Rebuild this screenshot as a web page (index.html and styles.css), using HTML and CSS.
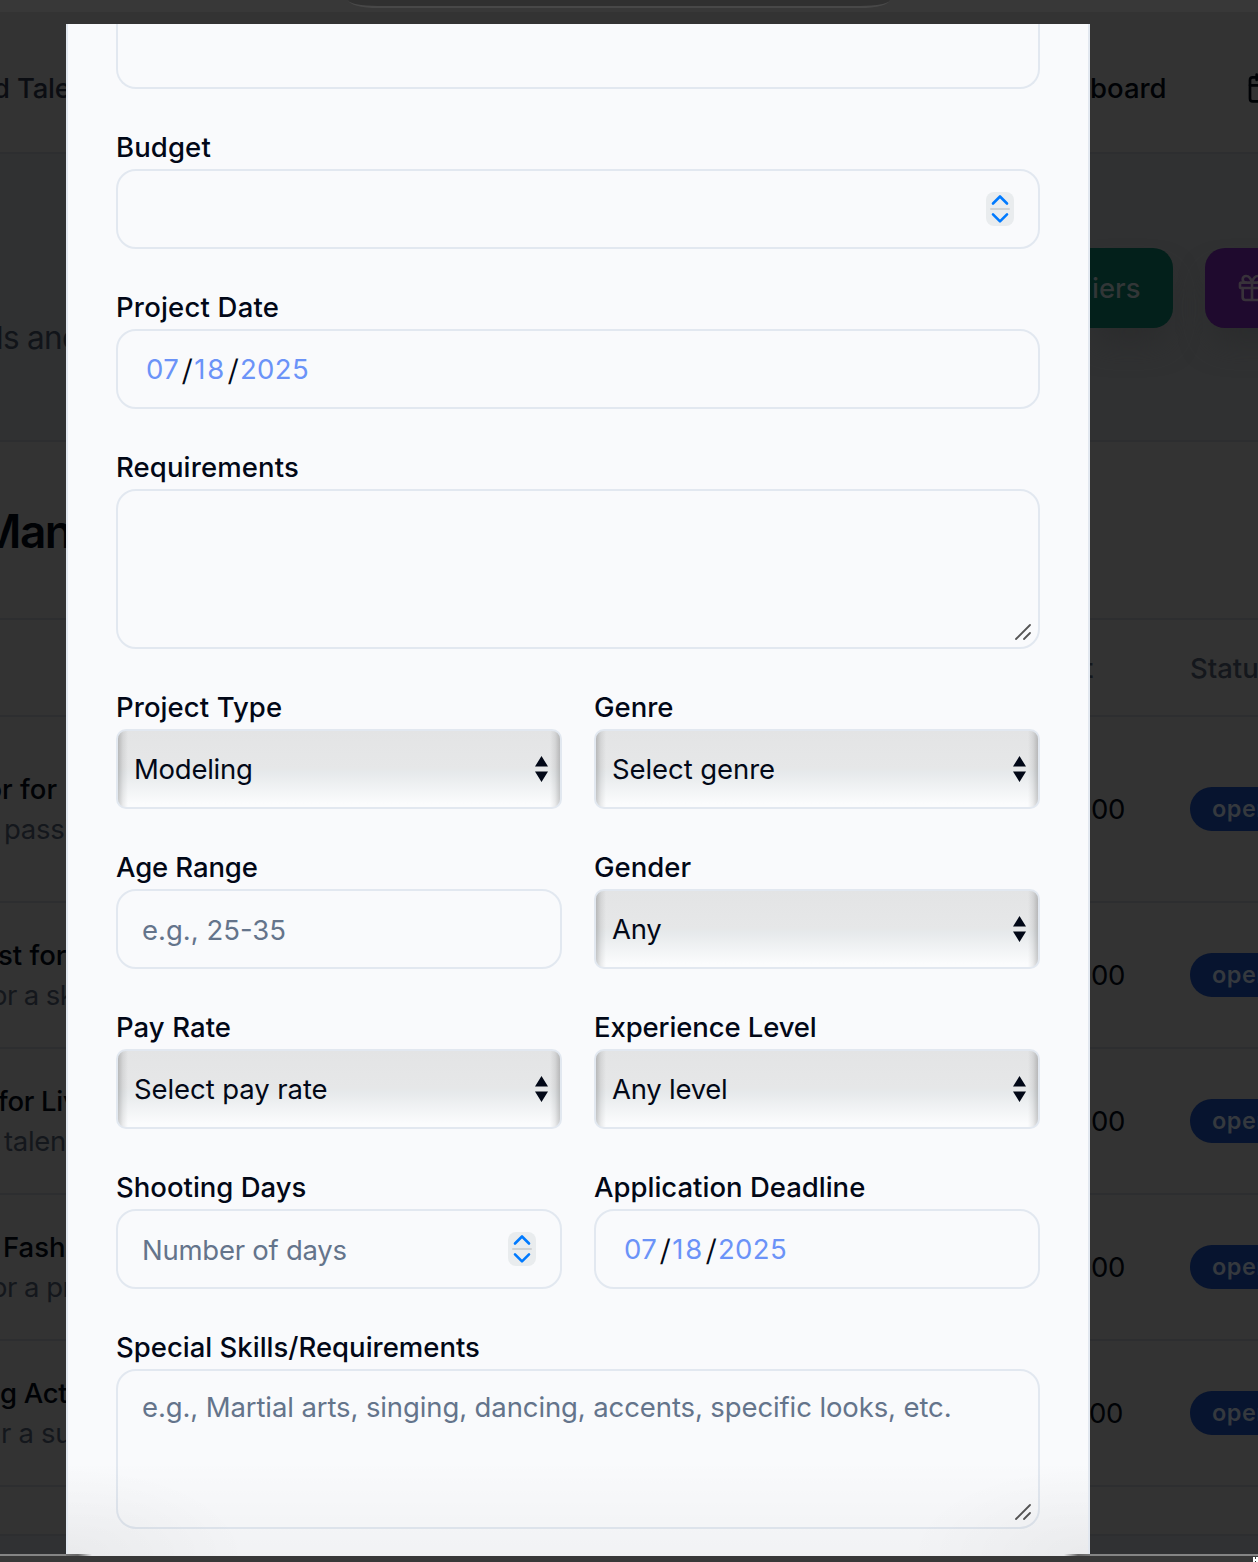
FILE: index.html
```html
<!DOCTYPE html>
<html lang="en">
<head>
<meta charset="utf-8">
<title>Create project</title>
<link rel="stylesheet" href="styles.css">
</head>
<body>
<div class="screen">
  <div class="backdrop">
    <div class="chrome"><div class="address"></div></div>
    <div class="band header">
      <div class="left"><span class="nav nav-talent">d Tale</span></div>
      <div class="right nav-right"><span class="nav nav-board">board</span>
        <svg class="icon calendar" viewBox="0 0 24 24"><path d="M8 2v4M16 2v4M3 10h18"/><rect x="3" y="4" width="18" height="18" rx="2"/></svg>
      </div>
    </div>
    <div class="band hero">
      <div class="left"><span class="tagline">ls and</span></div>
      <div class="right actions">
        <div class="btn green">iers</div>
        <div class="btn purple"><svg class="icon" viewBox="0 0 24 24"><rect x="3" y="8" width="18" height="4" rx="1"/><path d="M12 8v13M19 12v7a2 2 0 0 1-2 2H7a2 2 0 0 1-2-2v-7M7.5 8a2.5 2.5 0 0 1 0-5A4.8 8 0 0 1 12 8a4.8 8 0 0 1 4.5-5 2.5 2.5 0 0 1 0 5"/></svg></div>
      </div>
    </div>
    <div class="band heading"><div class="left"><span class="title">Man</span></div></div>
    <div class="band thead"><div class="left"></div><div class="right"><span class="amount col">t</span><span class="col">Status</span></div></div>
    <div class="band row tall"><div class="left"><b class="t1">or for</b><span class="s1">passi</span></div><div class="right"><span class="amount">00</span><span class="badge">open</span></div></div>
    <div class="band row"><div class="left"><b class="t2">st for</b><span class="s2">or a ski</span></div><div class="right"><span class="amount">00</span><span class="badge">open</span></div></div>
    <div class="band row"><div class="left"><b class="t3">for Liv</b><span class="s3">talent</span></div><div class="right"><span class="amount">00</span><span class="badge">open</span></div></div>
    <div class="band row"><div class="left"><b class="t4">Fashi</b><span class="s4">or a pr</span></div><div class="right"><span class="amount">00</span><span class="badge">open</span></div></div>
    <div class="band row"><div class="left"><b class="t5">g Acto</b><span class="s5">r a sup</span></div><div class="right"><span class="amount last">00</span><span class="badge">open</span></div></div>
    <div class="band tail"></div>
    <div class="footer"></div>
    <div class="edge"><svg viewBox="0 0 5 6"><path d="M0 6V1h2v2h1V1h2v5H3V5H2v1z"/></svg></div>
  </div>

  <div class="modal">
    <div class="control cut"></div>
    <div class="field"><div class="label l-budget">Budget</div>
      <div class="control input"><span></span><svg class="stepper" viewBox="0 0 28 34"><rect width="28" height="34" rx="8"/><path class="mid" d="M5 17h18"/><path d="M7 11.5l7-7 7 7M7 22.3l7 7 7-7"/></svg></div></div>
    <div class="field"><div class="label l-date">Project Date</div>
      <div class="control date"><span>07</span><i>/</i><span>18</span><i>/</i><span>2025</span></div></div>
    <div class="field"><div class="label l-req">Requirements</div>
      <div class="control area"><svg class="grip" viewBox="0 0 16 16"><path d="M1 15L15 1M9 15l6-6"/></svg></div></div>
    <div class="pair">
      <div class="field"><div class="label l-type">Project Type</div><div class="control select"><span class="v-model">Modeling</span><svg viewBox="0 0 13 26"><path d="M6.5 0L13 10.5H0zM6.5 26L0 15.5h13z"/></svg></div></div>
      <div class="field"><div class="label">Genre</div><div class="control select"><span class="v-sel">Select genre</span><svg viewBox="0 0 13 26"><path d="M6.5 0L13 10.5H0zM6.5 26L0 15.5h13z"/></svg></div></div>
    </div>
    <div class="pair">
      <div class="field"><div class="label l-age">Age Range</div><div class="control input"><span class="v-age">e.g., 25-35</span></div></div>
      <div class="field"><div class="label">Gender</div><div class="control select"><span class="v-any">Any</span><svg viewBox="0 0 13 26"><path d="M6.5 0L13 10.5H0zM6.5 26L0 15.5h13z"/></svg></div></div>
    </div>
    <div class="pair">
      <div class="field"><div class="label l-pay">Pay Rate</div><div class="control select"><span class="v-sel">Select pay rate</span><svg viewBox="0 0 13 26"><path d="M6.5 0L13 10.5H0zM6.5 26L0 15.5h13z"/></svg></div></div>
      <div class="field"><div class="label l-exp">Experience Level</div><div class="control select"><span class="v-level">Any level</span><svg viewBox="0 0 13 26"><path d="M6.5 0L13 10.5H0zM6.5 26L0 15.5h13z"/></svg></div></div>
    </div>
    <div class="pair">
      <div class="field"><div class="label">Shooting Days</div><div class="control input"><span class="v-days">Number of days</span><svg class="stepper" viewBox="0 0 28 34"><rect width="28" height="34" rx="8"/><path class="mid" d="M5 17h18"/><path d="M7 11.5l7-7 7 7M7 22.3l7 7 7-7"/></svg></div></div>
      <div class="field"><div class="label">Application Deadline</div><div class="control date"><span>07</span><i>/</i><span>18</span><i>/</i><span>2025</span></div></div>
    </div>
    <div class="field"><div class="label">Special Skills/Requirements</div>
      <div class="control area"><span class="v-skills">e.g., Martial arts, singing, dancing, accents, specific looks, etc.</span><svg class="grip" viewBox="0 0 16 16"><path d="M1 15L15 1M9 15l6-6"/></svg></div></div>
  </div>
  <div class="shade"></div>
</div>
</body>
</html>
```
FILE: styles.css
```css
* { box-sizing: border-box; }
body { margin: 0; font-family: Inter, "Liberation Sans", sans-serif; font-size: 27.5px; color: #020817; }
.screen { position: relative; width: 1258px; height: 1562px; overflow: hidden; background: #383838; }

.backdrop { display: flex; flex-direction: column; height: 1562px; background: #333; color: #000205; }
.chrome { height: 12px; background: #383838; display: flex; padding-left: 348px; }
.address { width: 542px; height: 8px; background: #303030; border-bottom: 2px solid #484848; border-radius: 0 0 30px 30px / 0 0 8px 8px; }
.band { display: grid; grid-template-columns: 66px 168px; column-gap: 1024px; border-bottom: 2px solid #2d2e30; white-space: nowrap; flex: none; }
.left, .right { overflow: hidden; display: flex; align-items: center; min-width: 0; }
.left > *, .right > * { flex: none; }
.header { height: 142px; padding-top: 12px; }
.nav { font-weight: 500; color: #0b0d12; }
.nav-board { color: #000205; width: 156px; }
.icon { width: 32px; height: 32px; fill: none; stroke: #000205; stroke-width: 2; stroke-linecap: round; stroke-linejoin: round; }
.nav-talent { margin-left: -7px; letter-spacing: -.2px; }
.hero { height: 288px; background: #303132; }
.tagline { font-size: 31.5px; color: #111419; margin: 80px 0 0 -4px; letter-spacing: -.7px; }
.actions { align-items: flex-start; padding-top: 94px; gap: 32px; }
.btn { height: 80px; display: flex; align-items: center; font-weight: 500; color: #323637; box-shadow: 0 20px 30px -6px #2b2c2d; }
.green { width: 83px; background: #03201b; border-radius: 0 20px 20px 0; padding-left: 2px; }
.purple { width: 100px; background: #1f0a2e; border-radius: 20px; padding-left: 31px; }
.purple .icon { stroke: #38323a; }
.heading { height: 178px; }
.title { font-size: 46px; font-weight: 600; letter-spacing: -1.5px; margin: 2px 0 0 -21px; }
.thead { height: 97px; }
.col { color: #14171c; font-weight: 500; }
.amount { width: 100px; padding-left: 1px; letter-spacing: -.4px; }
.amount.col { padding: 0; margin-left: -6px; width: 106px; }
.amount.last { padding: 0; margin-left: -1px; width: 101px; }
.row { height: 146px; }
.tall { height: 186px; }
.row .left { flex-direction: column; align-items: flex-start; justify-content: center; line-height: 40px; }
.row b { font-weight: 500; }
.row .left b, .row .left span { letter-spacing: -.3px; }
.row .left span { color: #14171c; }
.row .left .t1 { margin-left: -14.5px; letter-spacing: 0; } .s1 { margin-left: 4px; }
.row .left .t2 { margin-left: -2px; letter-spacing: 0; } .row .left .s2 { margin-left: -9px; letter-spacing: -.6px; }
.row .left .t3 { margin-left: -2px; } .s3 { margin-left: 4px; }
.row .left .t4 { margin-left: 3px; letter-spacing: 0; } .row .left .s4 { margin-left: -9px; letter-spacing: -.5px; }
.t5 { margin-left: 0; } .s5 { margin-left: 1px; }
.badge { width: 106px; height: 44px; border-radius: 22px; background: #07142f; color: #35393e; font-size: 23.5px; font-weight: 600; line-height: 44px; padding-left: 22px; letter-spacing: .5px; }
.tail { height: 49px; }
.footer { flex: 1; background: #303133; }
.edge { height: 8px; border-top: 2px solid #858585; background: #383838; display: flex; justify-content: flex-end; }
.edge svg { width: 5px; height: 6px; fill: #fff; }

.modal { position: absolute; left: 66px; top: 24px; width: 1024px; height: 1532px; overflow: hidden; background: #f9fafc; border: solid #e2e8f0; border-width: 0 2px; padding: 0 48px; display: flex; flex-direction: column; gap: 44px; }
.field { display: flex; flex-direction: column; gap: 8px; }
.pair { display: grid; grid-template-columns: 1fr 1fr; gap: 32px; }
.label { height: 28px; line-height: 28px; font-weight: 500; white-space: nowrap; }
.l-budget, .l-req { letter-spacing: .12px; }
.l-date { letter-spacing: .2px; }
.l-age, .l-exp { letter-spacing: -.12px; }
.l-pay, .l-type { letter-spacing: .08px; }
.control { height: 80px; border: 2px solid #e2e8f0; border-radius: 20px; display: flex; align-items: center; white-space: nowrap; }
.cut { height: 65px; border-top: 0; border-radius: 0 0 20px 20px; flex: none; }
.input { padding: 0 24px; justify-content: space-between; color: #64748b; }
.input span { padding-top: 2px; }
.v-days { letter-spacing: -.25px; }
.v-skills { letter-spacing: -.11px; }
.v-sel { letter-spacing: -.08px; }
.v-model, .v-any, .v-level { letter-spacing: -.25px; }
.stepper { width: 28px; height: 34px; fill: none; stroke: #007aff; stroke-width: 2.6; stroke-linecap: round; stroke-linejoin: round; }
.stepper rect { fill: #e9ecee; stroke: none; }
.stepper .mid { stroke: #cfd2d4; stroke-width: 2; }
.date { padding-left: 28px; color: #6b93f8; letter-spacing: .4px; }
.date span:nth-of-type(2) { letter-spacing: 2px; margin-right: -1.5px; }
.date i { font-style: normal; color: #020817; width: 15px; text-align: center; transform: translateX(1px) skewX(-3deg) translateY(1px) scaleY(1.07); }
.area { height: 160px; padding: 19px 24px; align-items: flex-start; color: #64748b; position: relative; }
.grip { position: absolute; right: 7px; bottom: 7px; width: 16px; height: 16px; stroke: #555; stroke-width: 1.8; stroke-linecap: round; }
.select { border-radius: 10px; padding: 0 12px 0 16px; justify-content: space-between; background: linear-gradient(90deg, #0003, #0001 5px, #0000 10px, #0000 calc(100% - 10px), #0001 calc(100% - 5px), #0003), linear-gradient(#e3e4e5, #e6e7e8 48%, #e6e9eb 54%, #fbfcfd 96%); }
.select svg { width: 13px; height: 26px; fill: #020817; }
.shade { position: absolute; left: 68px; top: 1460px; width: 1020px; height: 96px; background: radial-gradient(ellipse 180px 90px at 0 100%, #00000009, #0000), radial-gradient(ellipse 180px 90px at 100% 100%, #00000009, #0000), linear-gradient(#0000, #00000008); }
.shade::after { content: ""; position: absolute; left: -2px; right: -2px; bottom: 0; height: 2px; background: linear-gradient(90deg, #777 0, #666 12px, #0000 26px, #0000 calc(100% - 26px), #666 calc(100% - 12px), #777); }
```
